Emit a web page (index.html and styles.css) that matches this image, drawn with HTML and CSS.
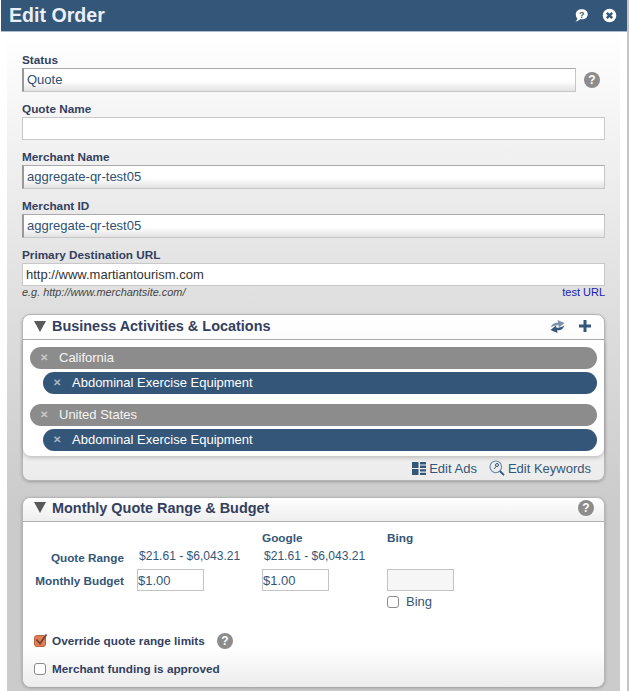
FILE: index.html
```html
<!DOCTYPE html>
<html lang="en">
<head>
<meta charset="utf-8">
<title>Edit Order</title>
<link rel="stylesheet" href="styles.css">
</head>
<body>
<div class="dialog">
  <header class="titlebar">
    <h1 class="title">Edit Order</h1>
    <div class="title-icons">
      <svg class="ti" width="15" height="15" viewBox="0 0 15 15"><path d="M7.800 1.200c3.400 0 6 2 6 5s-2.600 5-6 5c-.6 0-1.100 0-1.600-.2C5 12.400 3.400 13.400 1.500 13.500c1-.8 1.700-1.800 1.900-3C2.400 9.500 1.800 8 1.800 6.200c0-3 2.600-5 6-5z" fill="#fff"/><text x="7.800" y="10" class="ti-q">?</text></svg>
      <svg class="ti" width="15" height="15" viewBox="0 0 15 15"><circle cx="7.500" cy="7.500" r="6.800" fill="#fff"/><path d="M4.800 4.800l5.400 5.400M10.200 4.800l-5.400 5.400" stroke="#345678" stroke-width="2.400"/></svg>
    </div>
  </header>
  <main class="panel">
    <div class="field-status">
      <label class="flabel">Status</label>
      <div class="status-row">
        <input class="inp inp-ro" value="Quote" readonly>
        <span class="help help-status">?</span>
      </div>
    </div>
    <div class="field">
      <label class="flabel">Quote Name</label>
      <input class="inp" value="">
    </div>
    <div class="field">
      <label class="flabel">Merchant Name</label>
      <input class="inp inp-ro" value="aggregate-qr-test05" readonly>
    </div>
    <div class="field">
      <label class="flabel">Merchant ID</label>
      <input class="inp inp-ro" value="aggregate-qr-test05" readonly>
    </div>
    <div class="field">
      <label class="flabel">Primary Destination URL</label>
      <input class="inp inp-url" value="http://www.martiantourism.com">
      <div class="hint-row">
        <em class="hint">e.g. http://www.merchantsite.com/</em>
        <a class="test-url">test URL</a>
      </div>
    </div>

    <section class="box box-biz">
      <div class="box-head">
        <span class="tri"></span>
        <h2 class="box-title">Business Activities &amp; Locations</h2>
        <svg class="refresh" width="15" height="15" viewBox="0 0 15 15"><path d="M1 8.500C1.500 5 4.500 3.500 8 3.700L7.500 1l7 3L9 8.500l-.5-2.200C5.500 6 3 7 1 8.500z" fill="#7f93a8"/><path d="M14 6.500C13.500 10 10.500 11.500 7 11.300l.5 2.700-7-3L6 6.500l.5 2.200C9.500 9 12 8 14 6.500z" fill="#345678"/></svg>
        <svg class="plus" width="14" height="14" viewBox="0 0 14 14"><path d="M7 1v12M1 7h12" stroke="#345678" stroke-width="3"/></svg>
      </div>
      <div class="biz-body">
        <div class="pill pill-loc"><span class="x">✕</span>California</div>
        <div class="pill pill-act"><span class="x">✕</span>Abdominal Exercise Equipment</div>
        <div class="pill pill-loc pill-gap"><span class="x">✕</span>United States</div>
        <div class="pill pill-act"><span class="x">✕</span>Abdominal Exercise Equipment</div>
      </div>
      <div class="biz-foot">
        <a class="foot-link">
          <svg width="14" height="13" viewBox="0 0 14 13"><path d="M0 0h6.500v6H0zM0 7h6.500v6H0z" fill="#345678"/><path d="M8 0h6v2.400H8zM8 3.600h6V6H8zM8 7.200h6v2.400H8zM8 10.800h6V13H8z" fill="#345678"/></svg>
          Edit Ads
        </a>
        <a class="foot-link">
          <svg width="16" height="16" viewBox="0 0 16 16"><circle cx="6.800" cy="6.800" r="5.800" fill="none" stroke="#6f8aa5" stroke-width="1.200"/><path d="M10.800 11l4.200 4.200" stroke="#345678" stroke-width="1.800"/><path d="M5 9l2.500-3" stroke="#345678" stroke-width="1"/><circle cx="8" cy="5" r="1.500" fill="none" stroke="#345678"/></svg>
          Edit Keywords
        </a>
      </div>
    </section>

    <section class="box box-budget">
      <div class="box-head box-head-budget">
        <span class="tri"></span>
        <h2 class="box-title">Monthly Quote Range &amp; Budget</h2>
        <span class="help">?</span>
      </div>
      <div class="budget-body">
        <div class="bgrid">
          <span></span>
          <span></span>
          <b class="col-h">Google</b>
          <b class="col-h">Bing</b>
          <b class="row-h row-range">Quote Range</b>
          <span class="range">$21.61 - $6,043.21</span>
          <span class="range">$21.61 - $6,043.21</span>
          <span></span>
          <b class="row-h row-budget">Monthly Budget</b>
          <input class="money" value="$1.00">
          <input class="money" value="$1.00">
          <div class="bing-cell">
            <input class="money money-off" value="" disabled>
            <label class="bing-check"><span class="cb"></span>Bing</label>
          </div>
        </div>
        <div class="opt opt-override">
          <span class="cb cb-on"><svg width="14" height="13" viewBox="0 0 14 13"><path d="M2.500 5.500l3.500 4 6.500-9" fill="none" stroke="#6b4432" stroke-width="1.800"/></svg></span>
          <b class="opt-label">Override quote range limits</b>
          <span class="help help-opt">?</span>
        </div>
        <div class="opt opt-fund">
          <span class="cb"></span>
          <b class="opt-label">Merchant funding is approved</b>
        </div>
      </div>
    </section>
  </main>
</div>
</body>
</html>
```
FILE: styles.css
```css
* { box-sizing: border-box; }
html, body { margin: 0; padding: 0; height: 100%; overflow: hidden; background: #fff; }
body { font-family: "Liberation Sans", Arial, sans-serif; color: #345678; }
.dialog { width: 628px; height: 691px; margin-left: 1px; border-right: 2px solid #c4c4c4; background: #fff; }
.titlebar { height: 32px; background: #345678; border-bottom: 1px solid #a9bccd; display: flex; align-items: center; justify-content: space-between; padding: 0 10px 0 8px; }
.title { margin: -2px 0 0; font-size: 19.600px; line-height: 30px; font-weight: 700; color: #e9eff4; }
.title-icons { display: flex; gap: 13px; align-items: center; margin-top: -1px; }
.ti { display: block; }
.ti-q { font: 700 9px "Liberation Sans", sans-serif; fill: #345678; text-anchor: middle; }
.panel { width: 613px; height: 659px; margin-left: 6px; padding: 21px 15px 0 15px; background: linear-gradient(#fff 0, #f3f3f3 100px, #dedede 280px, #cbcbcb 480px, #cbcbcb 100%); }
.flabel { display: block; font-size: 11.750px; line-height: 13px; font-weight: 700; color: #333f5f; }
.field-status .flabel { margin-bottom: 2px; }
.status-row { display: flex; align-items: center; gap: 8px; }
.inp { display: block; width: 583px; height: 23px; margin-top: 2px; padding: 0 3px; border: 1.500px solid #c8c8c8; background: #fff; font: 13px "Liberation Sans", sans-serif; color: #333; outline: none; }
.inp-ro { height: 24px; padding-bottom: 2px; border: 1px solid #c6c6c6; border-top-color: #aaa; border-left: 2px solid #999; background: linear-gradient(#fff 55%, #e2e2e2 100%); color: #2f4f70; }
.status-row .inp { width: 554px; margin-top: 0; }
.field { margin-top: 10px; }
.inp-url { color: #333; }
.help { width: 16px; height: 16px; border-radius: 50%; background: #8c8c8c; color: #fff; font-size: 12px; font-weight: 700; line-height: 16px; text-align: center; flex: none; }
.hint-row { display: flex; justify-content: space-between; align-items: baseline; height: 13px; }
.hint { font-size: 10.900px; line-height: 13px; color: #444; }
.test-url { font-size: 11px; line-height: 13px; color: #1a1ab8; }
.box { width: 583px; border: 1px solid #b5b5b5; border-radius: 8px; box-shadow: 0 1px 3px rgba(0,0,0,.25); }
.box-biz { margin-top: 15px; height: 167px; background: linear-gradient(#fff, #ececec); }
.box-budget { margin-top: 16px; height: 190px; background: linear-gradient(#fff, #ececec 26px); }
.box-head { height: 25px; display: flex; align-items: center; padding: 0 10px 2px 11px; border-bottom: 1px solid #b0b0b0; }
.box-head-budget { height: 24px; padding-bottom: 4px; }
.tri { width: 0; height: 0; border-left: 6px solid transparent; border-right: 6px solid transparent; border-top: 11px solid #5a5a5a; margin-right: 6px; flex: none; }
.box-title { margin: 0; font-size: 14.450px; line-height: 20px; font-weight: 700; color: #333f5f; flex: 1; }
.refresh { margin-right: 13px; }
.plus { margin-right: 2px; }
.biz-body { height: 116px; background: #fff; border-radius: 0 0 8px 8px; padding: 7px 7px 0 7px; box-shadow: 0 2px 4px rgba(0,0,0,.2); }
.pill { height: 22px; border-radius: 11px; color: #fff; font-size: 13px; line-height: 22px; display: flex; align-items: center; }
.pill-loc { background: #8c8c8c; color: #f4f4f4; }
.pill-act { background: #345678; margin: 3px 0 0 13px; }
.pill-gap { margin-top: 10px; }
.x { width: 29px; padding-left: 10px; font-size: 9.500px; font-weight: 700; color: #c9c9c9; flex: none; }
.pill-act .x { color: #a9b8c6; }
.biz-foot { height: 24px; display: flex; justify-content: flex-end; align-items: center; gap: 12px; padding: 0 13px 0 0; }
.foot-link { display: flex; align-items: center; gap: 3px; font-size: 13px; color: #345678; }
.budget-body { height: 165px; background: linear-gradient(#fff 125px, #ececec 100%); border-radius: 0 0 8px 8px; position: relative; }
.bgrid { display: grid; grid-template-columns: 114px 125px 125px 1fr; padding-top: 9px; align-items: start; }
.col-h { font-size: 11.750px; line-height: 13px; color: #345678; }
.row-h { font-size: 11.750px; line-height: 13px; color: #345678; text-align: right; padding-right: 13px; }
.row-range { margin-top: 7px; }
.row-budget { margin-top: 10px; }
.range { font-size: 12.050px; line-height: 13px; margin-top: 6px; margin-left: 2px; color: #345678; }
.bgrid > .money { margin-top: 5px; }
.money { display: block; width: 67px; height: 22px; padding: 0; border: 1px solid #c4c4c4; background: #fff; font: 13px "Liberation Sans", sans-serif; color: #345678; outline: none; }
.money-off { background: #f6f6f6; }
.bing-cell { margin-top: 5px; }
.bing-check { display: flex; align-items: center; gap: 7px; font-size: 13px; margin-top: 3px; color: #345678; }
.cb { width: 12px; height: 12px; border: 1px solid #8a8a8a; border-radius: 3px; background: #fff; display: block; flex: none; position: relative; }
.cb-on { background: #e37d55; border-color: #b9643c; }
.cb-on svg { position: absolute; left: -1px; top: -2px; }
.opt { display: flex; align-items: center; position: absolute; left: 11px; }
.opt-override { top: 111px; }
.opt-fund { top: 140px; }
.opt-label { margin-left: 6px; font-size: 11.750px; line-height: 14px; color: #333f5f; }
.help-opt { margin-left: 12px; }
```
